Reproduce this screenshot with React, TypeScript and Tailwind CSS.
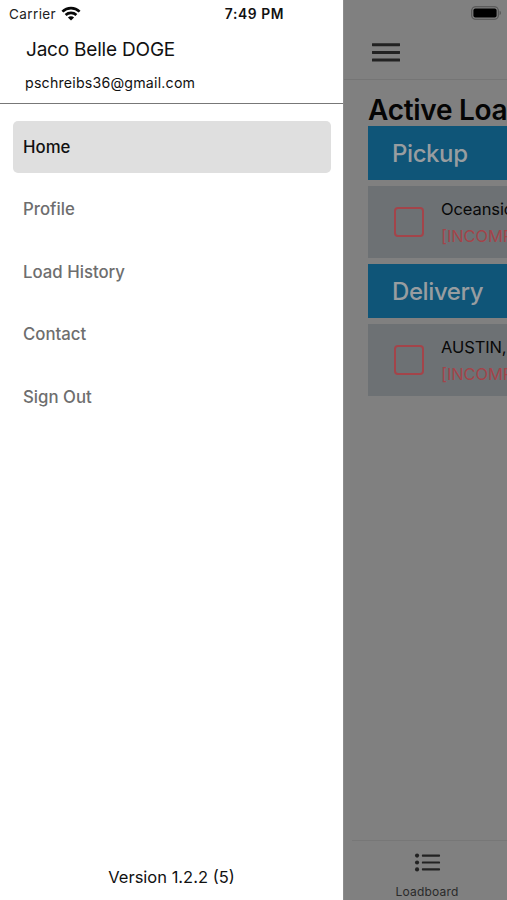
const menuItems = ["Home", "Profile", "Load History", "Contact", "Sign Out"];

const stops = [
  { title: "Pickup", place: "Oceanside, CA", status: "[INCOMPLETE]" },
  { title: "Delivery", place: "AUSTIN, TX", status: "[INCOMPLETE]" },
];

function WifiIcon() {
  return (
    <svg width="20" height="15" viewBox="0 0 20 15" fill="none" stroke="#080808" strokeWidth="2.7">
      <path d="M1.4 5.6a12.4 12.4 0 0 1 17.2 0" />
      <path d="M4.6 9a8 8 0 0 1 10.8 0" />
      <path d="M10 14.4 6.9 11.5a4.4 4.4 0 0 1 6.2 0z" fill="#080808" stroke="none" />
    </svg>
  );
}

function BatteryIcon() {
  return (
    <svg width="31" height="15" viewBox="0 0 31 15">
      <rect x="0.7" y="0.7" width="26.6" height="12.6" rx="3.8" fill="none" stroke="#505050" strokeWidth="1.1" />
      <rect x="2.4" y="2.4" width="23.2" height="9.2" rx="2" fill="#000" />
      <path d="M28.6 4.8c1.6.6 1.6 3.8 0 4.4z" fill="#505050" />
    </svg>
  );
}

function MenuIcon() {
  return (
    <svg width="28" height="20" viewBox="0 0 28 20" fill="#222">
      <rect y="0.2" width="28" height="3" rx="0.4" />
      <rect y="7.9" width="28" height="3" rx="0.4" />
      <rect y="15.6" width="28" height="3" rx="0.4" />
    </svg>
  );
}

function ListIcon() {
  return (
    <svg width="29" height="22" viewBox="0 0 29 22" fill="#222">
      {[3, 11, 19].map((y) => (
        <g key={y}>
          <circle cx="2.4" cy={y} r="2.4" />
          <rect x="8" y={y - 1.3} width="21" height="2.6" rx="0.8" />
        </g>
      ))}
    </svg>
  );
}

function Drawer() {
  return (
    <aside className="flex w-[343px] shrink-0 flex-col bg-white text-[#111]">
      {/* Status bar */}
      <div className="flex h-7 items-center pl-[9px]">
        <span className="text-[13.5px] tracking-[0.4px] text-[#222]">Carrier</span>
        <div className="-mt-[2px] ml-[5px]">
          <WifiIcon />
        </div>
        <span className="ml-auto mr-[59px] text-[13.8px] font-semibold tracking-[0.6px]">7:49 PM</span>
      </div>

      {/* Account */}
      <div className="h-[76px] border-b border-[#777] pl-[26px] pt-2">
        <div className="text-[19px] leading-[27px] tracking-[-0.2px]">Jaco Belle DOGE</div>
        <div className="-ml-px mt-[9px] text-[14.2px] leading-[22px] tracking-[0.2px]">pschreibs36@gmail.com</div>
      </div>

      <nav className="flex flex-col gap-[10px] px-[13px] pt-[17px]">
        {menuItems.map((item, i) => (
          <div
            key={item}
            className={`flex h-[52.4px] w-[318px] items-center rounded-[5px] pl-[10px] pt-px text-[16.8px] font-medium ${
              i === 0 ? "bg-[#dfdfdf] text-[#111]" : "text-[#6e6e6e]"
            }`}
          >
            {item}
          </div>
        ))}
      </nav>

      <div className="mt-auto pb-[11px] text-center text-[16.5px] leading-6">Version 1.2.2 (5)</div>
    </aside>
  );
}

export default function App() {
  return (
    <div className="flex h-[900px] w-[507px] overflow-hidden bg-[#808080] font-['Inter','Liberation_Sans',sans-serif]">
      <Drawer />

      {/* Dimmed loadboard */}
      <main className="flex min-w-0 flex-1 flex-col overflow-hidden whitespace-nowrap border-l border-[#8c8c8c]">
        <header className="flex h-[80px] shrink-0 flex-col border-b border-[#757575]">
          <div className="flex justify-end pr-[5px] pt-[6px]">
            <BatteryIcon />
          </div>
          <div className="pl-[28px] pt-[22px]">
            <MenuIcon />
          </div>
        </header>

        <section className="pl-6 pt-[11px]">
          <h1 className="h-[35px] text-[28px] font-semibold leading-[38px] tracking-[-0.3px] text-[#050505]">
            Active Loads
          </h1>
          {stops.map((stop) => (
            <div key={stop.title} className="mb-[6px]">
              <h2 className="h-[54px] bg-[#0f5578] pl-[24px] text-[24px] font-medium leading-[55px] tracking-[-0.4px] text-[#989da0]">
                {stop.title}
              </h2>
              <div className="mt-[6px] flex h-[72px] items-center bg-[#6d7174] pl-[26px]">
                <div className="h-[30px] w-[30px] shrink-0 rounded-[4px] border-2 border-[#a3444a]" />
                <div className="ml-[17px] pt-[2px] text-[16.5px] leading-[27px] tracking-[-0.1px]">
                  <div className="text-[#080808]">{stop.place}</div>
                  <div className="text-[#a3444a]">{stop.status}</div>
                </div>
              </div>
            </div>
          ))}
        </section>

        <footer className="ml-2 mt-auto flex h-[60px] flex-col items-center border-t border-[#777] pr-[5px] pt-[12px] text-[#2a2a2a]">
          <ListIcon />
          <span className="mt-[12px] text-[12px] leading-4 tracking-[0.2px]">Loadboard</span>
        </footer>
      </main>
    </div>
  );
}
